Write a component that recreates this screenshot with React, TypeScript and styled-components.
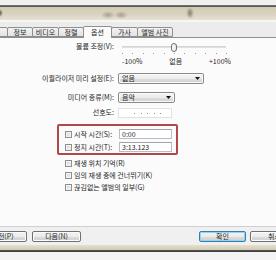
import styled, { createGlobalStyle } from 'styled-components';

const GlobalStyle = createGlobalStyle`
  html, body {
    margin: 0;
    padding: 0;
  }
  body {
    width: 276px;
    height: 260px;
    overflow: hidden;
    background: #f0f0f0;
    font-family: "Noto Sans CJK KR", "Noto Sans", sans-serif;
    font-size: 7px;
    color: #1e1e1e;
  }
`;

const Window = styled.div`
  width: 276px;
  height: 260px;
  display: flex;
  flex-direction: column;
  overflow: hidden;
`;

const TopEdge = styled.div`
  height: 5px;
  background: #efefef;
`;
const DarkRule = styled.div`
  height: 2px;
  background: linear-gradient(#7c7c7c, #4c4c4c);
`;
const TitleBand = styled.div`
  height: 13px;
  background:
    radial-gradient(ellipse 3px 4px at 0px 6px, rgba(60, 50, 35, 0.8), transparent),
    radial-gradient(ellipse 7px 4px at 108px 8px, rgba(90, 80, 60, 0.4), transparent),
    radial-gradient(ellipse 7px 4px at 121px 8px, rgba(90, 80, 60, 0.4), transparent),
    radial-gradient(ellipse 4px 6px at 190px 6px, rgba(70, 60, 45, 0.55), transparent),
    linear-gradient(#d2cbb3, #dad4c1 60%, #e5e1d4);
`;
const LightRule = styled.div`
  height: 2px;
  background: #f7f6f2;
`;

const TabRow = styled.div`
  height: 15px;
  display: flex;
  align-items: flex-end;
  margin-left: -20px;
  background: #ececec;
`;
const Tab = styled.div<{ $w: number; $active?: boolean }>`
  box-sizing: border-box;
  width: ${(p) => p.$w}px;
  height: ${(p) => (p.$active ? 12 : 10)}px;
  margin-right: -1px;
  margin-bottom: ${(p) => (p.$active ? -1 : 0)}px;
  border: 1px solid #8e8f8f;
  border-bottom: ${(p) => (p.$active ? 'none' : '1px solid #8e8f8f')};
  border-radius: 2px 2px 0 0;
  background: ${(p) => (p.$active ? '#fbfbfb' : 'linear-gradient(#f3f3f3, #e2e2e2)')};
  position: relative;
  z-index: ${(p) => (p.$active ? 2 : 1)};
  display: flex;
  align-items: center;
  justify-content: center;
  line-height: 1;
  padding-bottom: ${(p) => (p.$active ? 1 : 0)}px;
  white-space: nowrap;
`;

const Panel = styled.div`
  box-sizing: border-box;
  height: 190px;
  background: #fbfbfb;
  border-top: 1px solid #8e8f8f;
  border-bottom: 1px solid #cfcfcf;
  padding-top: 4px;
  display: flex;
  flex-direction: column;
`;

const FormRow = styled.div<{ $top?: number; $h: number }>`
  display: grid;
  grid-template-columns: 114px auto;
  column-gap: 4px;
  align-items: center;
  height: ${(p) => p.$h}px;
  margin-top: ${(p) => p.$top ?? 0}px;
`;
const Label = styled.span`
  text-align: right;
  line-height: 1;
  white-space: nowrap;
  padding-bottom: 1px;
`;

const Slider = styled.div`
  width: 112px;
  height: 10px;
  display: flex;
  align-items: center;
  justify-content: center;
  background: linear-gradient(#d0d0d0, #e4e4e4) center / 104px 2px no-repeat;
`;
const Thumb = styled.div`
  box-sizing: border-box;
  width: 6px;
  height: 9px;
  border: 1px solid #6f6f6f;
  border-radius: 3px;
  background: linear-gradient(90deg, #fdfdfd, #e6e6e6);
`;
const Ticks = styled.div`
  margin: 1px 0 0 122px;
  width: 105px;
  height: 1px;
  display: flex;
  justify-content: space-between;
`;
const Tick = styled.span`
  width: 1px;
  height: 1px;
  background: #9a9a9a;
`;
const ScaleLabels = styled.div`
  margin: 3px 0 0 122px;
  width: 109px;
  height: 9px;
  display: flex;
  justify-content: space-between;
  align-items: center;
  line-height: 1;
`;

const Combo = styled.div<{ $w: number }>`
  box-sizing: border-box;
  width: ${(p) => p.$w}px;
  height: 11px;
  border: 1px solid #8a8a8a;
  border-radius: 2px;
  background: linear-gradient(#f5f5f5, #ececec 50%, #dedede 51%, #d2d2d2);
  box-shadow: inset 0 0 0 1px #fafafa;
  display: flex;
  align-items: center;
  justify-content: space-between;
  padding: 0 3px 0 3px;
  line-height: 1;
`;
const Arrow = () => (
  <svg width="5" height="3" viewBox="0 0 5 3">
    <path d="M0 0h5L2.5 3z" fill="#111" />
  </svg>
);

const Rating = styled.div`
  box-sizing: border-box;
  width: 54px;
  height: 10px;
  border: 1px solid #e2e2e2;
  background: #fff;
  display: flex;
  align-items: center;
  gap: 5.5px;
  padding-left: 15px;
`;
const Dot = styled.span`
  width: 1px;
  height: 1px;
  background: #8c8c8c;
`;

const TimeBox = styled.div`
  box-sizing: border-box;
  margin: 6px 0 0 57px;
  width: 121px;
  height: 31px;
  border: 2px solid #b0474b;
  border-radius: 2px;
  padding: 3px 4px 1px 6px;
  display: flex;
  flex-direction: column;
  gap: 3px;
`;
const TimeRow = styled.div`
  display: grid;
  grid-template-columns: 7px 1fr 54px;
  column-gap: 2px;
  align-items: center;
  height: 10px;
  line-height: 1;
  white-space: nowrap;
`;
const Check = styled.span`
  box-sizing: border-box;
  width: 7px;
  height: 7px;
  border: 1px solid #8f8f8f;
  background: linear-gradient(135deg, #d6d6d6, #f4f4f4);
  box-shadow: inset 0 0 0 1px #f2f2f2;
`;
const TextInput = styled.div`
  box-sizing: border-box;
  height: 10px;
  border: 1px solid #b8bcc4;
  border-top-color: #9ea2aa;
  background: #fff;
  display: flex;
  align-items: center;
  padding-left: 2px;
  margin-left: 1px;
`;

const Checks = styled.div`
  margin: 2px 0 0 65px;
  display: flex;
  flex-direction: column;
`;
const CheckRow = styled.div`
  height: 12px;
  display: flex;
  align-items: center;
  gap: 2px;
  line-height: 1;
  white-space: nowrap;
`;

const ButtonBar = styled.div`
  height: 18px;
  display: flex;
  justify-content: space-between;
  align-items: flex-start;
  padding-top: 4px;
  box-sizing: border-box;
  margin: 0 -23px 0 -22px;
`;
const ButtonGroup = styled.div<{ $gap: number }>`
  display: flex;
  gap: ${(p) => p.$gap}px;
`;
const Button = styled.div<{ $default?: boolean }>`
  box-sizing: border-box;
  width: ${(p) => (p.$default ? 47 : 49)}px;
  height: 11px;
  border: 1px solid ${(p) => (p.$default ? '#3d7bad' : '#707070')};
  border-radius: 2px;
  background: linear-gradient(#f3f3f3, #ebebeb 50%, #dddddd 51%, #cfcfcf);
  box-shadow: inset 0 0 0 1px ${(p) => (p.$default ? '#8fd6f3' : '#fbfbfb')};
  display: flex;
  align-items: center;
  justify-content: center;
  line-height: 1;
  white-space: nowrap;
`;

const BottomBand = styled.div`
  height: 5px;
  background: linear-gradient(#e4dfcf, #d2cab0);
`;
const BottomRule = styled.div`
  height: 2px;
  background: linear-gradient(#555, #3a3a3a);
`;
const BottomEdge = styled.div`
  height: 8px;
  background: #f4f4f4;
`;

const tabs = [
  { label: '', w: 28 },
  { label: '정보', w: 26 },
  { label: '비디오', w: 27 },
  { label: '정렬', w: 26 },
  { label: '옵션', w: 29, active: true },
  { label: '가사', w: 27 },
  { label: '앨범 사진', w: 36 },
];

function App() {
  return (
    <Window>
      <GlobalStyle />
      <TopEdge />
      <DarkRule />
      <TitleBand />
      <LightRule />
      <TabRow>
        {tabs.map((t, i) => (
          <Tab key={i} $w={t.w} $active={t.active}>
            {t.label}
          </Tab>
        ))}
      </TabRow>
      <Panel>
        <FormRow $h={10}>
          <Label>볼륨 조정(V):</Label>
          <Slider>
            <Thumb />
          </Slider>
        </FormRow>
        <Ticks>
          {Array.from({ length: 11 }).map((_, i) => (
            <Tick key={i} />
          ))}
        </Ticks>
        <ScaleLabels>
          <span>-100%</span>
          <span>없음</span>
          <span>+100%</span>
        </ScaleLabels>
        <FormRow $top={7} $h={11}>
          <Label>이퀄라이저 미리 설정(E):</Label>
          <Combo $w={86}>
            <span>없음</span>
            <Arrow />
          </Combo>
        </FormRow>
        <FormRow $top={8} $h={11}>
          <Label>미디어 종류(M):</Label>
          <Combo $w={57}>
            <span>음악</span>
            <Arrow />
          </Combo>
        </FormRow>
        <FormRow $top={5} $h={10}>
          <Label>선호도:</Label>
          <Rating>
            {Array.from({ length: 5 }).map((_, i) => (
              <Dot key={i} />
            ))}
          </Rating>
        </FormRow>
        <TimeBox>
          <TimeRow>
            <Check />
            <span>시작 시간(S):</span>
            <TextInput>0:00</TextInput>
          </TimeRow>
          <TimeRow>
            <Check />
            <span>정지 시간(T):</span>
            <TextInput>3:13.123</TextInput>
          </TimeRow>
        </TimeBox>
        <Checks>
          <CheckRow>
            <Check />
            <span>재생 위치 기억(R)</span>
          </CheckRow>
          <CheckRow>
            <Check />
            <span>임의 재생 중에 건너뛰기(K)</span>
          </CheckRow>
          <CheckRow>
            <Check />
            <span>끊김없는 앨범의 일부(G)</span>
          </CheckRow>
        </Checks>
      </Panel>
      <ButtonBar>
        <ButtonGroup $gap={5}>
          <Button>이전(P)</Button>
          <Button>다음(N)</Button>
        </ButtonGroup>
        <ButtonGroup $gap={4}>
          <Button $default>확인</Button>
          <Button>취소</Button>
        </ButtonGroup>
      </ButtonBar>
      <BottomBand />
      <BottomRule />
      <BottomEdge />
    </Window>
  );
}

export default App;
